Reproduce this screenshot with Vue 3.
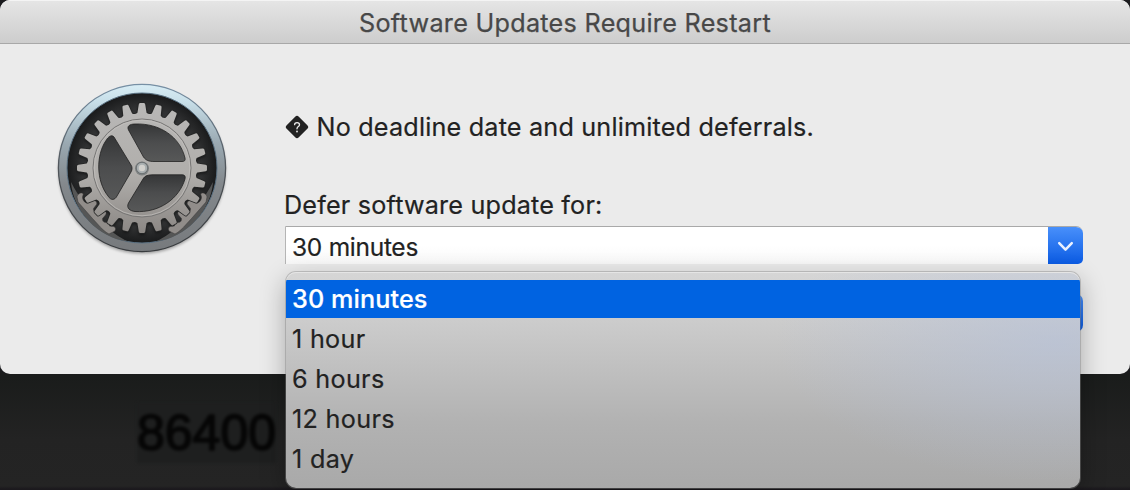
<script setup>
const title = 'Software Updates Require Restart'
const options = ['30 minutes', '1 hour', '6 hours', '12 hours', '1 day']
const selected = options[0]

// Outline of the 24-tooth wheel, centred on the origin.
const pt = (r, deg) => {
  const a = (deg * Math.PI) / 180
  return `${(r * Math.sin(a)).toFixed(2)} ${(-r * Math.cos(a)).toFixed(2)}`
}
let wheel = ''
for (let i = 0; i < 24; i++) {
  const a = i * 15
  wheel += `${i ? 'L' : 'M'}${pt(55.5, a - 4.7)}L${pt(63.6, a - 2.9)}Q${pt(65, a - 2.6)} ${pt(65, a - 1.8)}`
  wheel += `L${pt(65, a + 1.8)}Q${pt(65, a + 2.6)} ${pt(63.6, a + 2.9)}L${pt(55.5, a + 4.7)}Q${pt(53.5, a + 7.5)} ${pt(55.5, a + 10.3)}`
}
wheel += 'Z'

const holes = [
  'M-13.5 -38C-15.5 -42 -12 -44 -7 -44C18 -45 38 -31 43 -10C43.6 -7.5 42.5 -6.5 40 -6.5L12 -6.5C7 -6.5 4 -7.5 1.5 -11Z',
  'M-28 -31C-30.5 -34 -34 -31 -36 -27.5C-46 -13 -46 13 -34 28C-31 33 -27 32 -25 28L-11 4C-9.6 1.5 -9.6 -1 -11 -3Z',
  'M-13.5 35C-16 40 -12 43 -7 43.5C17 45 37 31 43 11C43.8 8 42.5 6.8 40 6.8L12 6.8C6 6.8 3 7.5 1 11Z',
]
const segment =
  'M-65 29C-65 26 -60 23.5 -58.7 26L-59.5 29C-59.5 33 -56 36 -53.5 34.5L-49.5 32.5C-46 32 -44.5 34.5 -45.5 36.5L-48.5 40.5C-49 43.5 -46.5 45 -44 44L-39.5 42.5C-36 42.5 -35 45 -36.5 47L-39.5 50.5C-40 53.5 -37.5 55 -35 54.5L-32 54L-32.5 58L-28 58.5C-25.5 60 -26.5 63 -28 63.5L-33 66C-37 64 -41 60 -44 56.5L-49.5 50.5L-57 42L-64 34Z'
</script>

<template>
  <main class="desktop">
    <div class="backdrop-number">86400</div>
    <section class="dialog">
      <header class="titlebar"><h1>{{ title }}</h1></header>
      <div class="body">
        <svg class="app-icon" viewBox="-90 -90 180 180" aria-hidden="true">
          <defs>
            <linearGradient id="rim" x1="0" y1="0" x2="0" y2="1">
              <stop offset="0" stop-color="#d8edf5" />
              <stop offset=".1" stop-color="#c8dfe9" />
              <stop offset=".35" stop-color="#9aa9b2" />
              <stop offset=".6" stop-color="#83888c" />
              <stop offset="1" stop-color="#777a7d" />
            </linearGradient>
            <linearGradient id="edge" x1="0" y1="0" x2="0" y2="1">
              <stop offset="0" stop-color="#7790a5" />
              <stop offset=".5" stop-color="#50555a" />
              <stop offset="1" stop-color="#383b3e" />
            </linearGradient>
            <linearGradient id="metal" x1="0" y1="0" x2="0" y2="1">
              <stop offset="0" stop-color="#b9b8b7" />
              <stop offset=".55" stop-color="#b0aeab" />
              <stop offset="1" stop-color="#8b8784" />
            </linearGradient>
            <linearGradient id="hole" x1="0" y1="0" x2="0" y2="1">
              <stop offset="0" stop-color="#353637" />
              <stop offset=".5" stop-color="#4c4d4e" />
              <stop offset="1" stop-color="#575858" />
            </linearGradient>
            <radialGradient id="well">
              <stop offset="0" stop-color="#444" />
              <stop offset=".8" stop-color="#303132" />
              <stop offset="1" stop-color="#191a1b" />
            </radialGradient>
            <filter id="soft" x="-20%" y="-20%" width="140%" height="140%">
              <feGaussianBlur stdDeviation="1.6" />
            </filter>
          </defs>
          <circle r="83.5" cy="2" fill="#000" opacity=".35" filter="url(#soft)" />
          <circle r="83.6" fill="url(#rim)" stroke="url(#edge)" stroke-width="1.3" />
          <circle r="75" fill="url(#well)" stroke="#5b7284" stroke-width="1" />
          <path d="M-71 14C-69 43 -44 70 -14 73.5C-30 66 -55 45 -71 14ZM71 14C69 43 44 70 14 73.5C30 66 55 45 71 14Z" fill="#555656" />
          <path :d="wheel" fill="#000" opacity=".5" transform="translate(0 2)" filter="url(#soft)" />
          <g fill="#918d8a" stroke="#3a3938" stroke-width=".5">
            <path :d="segment" />
            <path :d="segment" transform="scale(-1 1)" />
          </g>
          <path :d="wheel" fill="none" stroke="#252626" stroke-width="1.6" />
          <path :d="wheel" fill="url(#metal)" />
          <circle r="49" fill="none" stroke="#777675" stroke-width="1" />
          <circle r="47.8" fill="none" stroke="#c4c2bf" stroke-width=".7" />
          <path v-for="h in holes" :key="h" :d="h" fill="url(#hole)" stroke="#222" stroke-width=".8" />
          <circle r="7" cy=".5" fill="#7e8282" />
          <circle r="5.7" fill="#a9afb0" stroke="#62676a" stroke-width=".8" />
          <circle r="3.2" fill="#d2d1cd" />
        </svg>
        <div class="content">
          <p class="message">
            <svg class="badge" viewBox="0 0 24 24" aria-hidden="true">
              <rect x="3.4" y="3.4" width="17.2" height="17.2" rx="2.6" transform="rotate(45 12 12)" fill="#222" />
              <path d="M9.6 9.7C9.6 6.8 14.5 6.8 14.5 9.7C14.5 11.6 12 11.6 12 13.8" fill="none" stroke="#ebebeb" stroke-width="1.3" stroke-linecap="round" />
              <circle cx="12" cy="16.5" r=".9" fill="#ebebeb" />
            </svg>
            <span class="message-text">No deadline date and unlimited deferrals.</span>
          </p>
          <label class="label">Defer software update for:</label>
          <div class="combo">
            <span class="value">{{ selected }}</span>
            <button class="toggle" aria-label="Toggle list">
              <svg viewBox="0 0 35 38"><path d="M11.2 17.2L17.5 23.6L23.8 17.2" fill="none" stroke="#e8f0ff" stroke-width="2.5" stroke-linecap="round" stroke-linejoin="round" /></svg>
            </button>
          </div>
          <div class="actions"><span class="confirm"></span></div>
        </div>
      </div>
    </section>
    <ul class="menu">
      <li v-for="o in options" :key="o" :class="{ active: o === selected }"><span>{{ o }}</span></li>
    </ul>
  </main>
</template>

<style>
body { margin: 0; overflow: hidden; background: #212121; }
</style>

<style scoped>
* { box-sizing: border-box; }
.desktop {
  position: relative;
  width: 1130px;
  height: 490px;
  overflow: hidden;
  background: linear-gradient(#1b1b1e 0 370px, #1a1c1b 376px, #232323 440px, #242424 486px, #1b191d 489px);
  font-family: Inter, "Liberation Sans", sans-serif;
  font-size: 25.2px;
  color: #222;
}
.backdrop-number {
  position: absolute;
  left: 137px;
  top: 403px;
  font: 50px/60px "Liberation Sans", sans-serif;
  color: #060606;
  -webkit-text-stroke: 1.6px #060606;
  background: #1e1f1f;
  filter: blur(1.4px);
}
.dialog {
  position: relative;
  height: 374px;
  border-radius: 10px;
  overflow: hidden;
  background: #ebebeb;
}
.titlebar {
  height: 44px;
  border-top: 1px solid #f4f4f4;
  border-bottom: 1px solid #a8a8a8;
  background: linear-gradient(#e5e5e5, #cdcdcd);
  display: flex;
  justify-content: center;
}
h1 {
  margin: 0;
  font-size: 25.2px;
  line-height: 44px;
  font-weight: 400;
  letter-spacing: 0.28px;
  color: #484848;
  -webkit-text-stroke: 0.25px;
  white-space: nowrap;
}
.body { display: flex; padding-left: 52px; }
.app-icon { width: 180px; height: 180px; margin-top: 34px; flex: none; }
.content { width: 798px; margin-left: 53px; padding-top: 67px; -webkit-text-stroke: 0.2px; }
.message { display: flex; align-items: center; margin: 0; height: 32px; white-space: nowrap; }
.badge { width: 24px; height: 24px; }
.message-text { margin-left: 7.5px; letter-spacing: 0.19px; }
.label { display: block; margin: 46px 0 0 -1px; height: 37px; line-height: 32px; letter-spacing: 0.18px; white-space: nowrap; }
.combo {
  display: flex;
  height: 38px;
  border-top: 1px solid #a9a9a9;
  border-left: 1px solid #b5b5b5;
  border-top-right-radius: 7px;
  border-bottom-right-radius: 5px;
  background: linear-gradient(#fff 50%, #f8f8f8);
  overflow: hidden;
}
.value { flex: 1; padding-left: 6px; font-size: 24.5px; letter-spacing: -0.28px; line-height: 41px; }
.toggle {
  width: 35px;
  height: 38px;
  margin-top: -1px;
  padding: 0;
  border: 0;
  background: linear-gradient(#4a91fb, #0b5be3);
}
.toggle svg { display: block; width: 35px; height: 38px; }
.actions { display: flex; justify-content: flex-end; margin-top: 30px; }
.confirm { width: 140px; height: 38px; border-radius: 7px; background: linear-gradient(#4a91fb, #0b5be3); }
.menu {
  position: absolute;
  left: 286px;
  top: 272px;
  width: 794px;
  height: 216px;
  margin: 0;
  padding: 8px 0 0;
  list-style: none;
  border-radius: 10px;
  overflow: hidden;
  background:
    radial-gradient(ellipse 280px 140px at 770px 70px, rgba(180, 193, 220, .58), rgba(180, 193, 220, 0)),
    linear-gradient(#d6d6d6 0, #cccccc 48px, #b2b2b2 150px, #a9a9a9);
  box-shadow: 0 0 0 1px rgba(130, 130, 130, .4), 0 8px 26px rgba(0, 0, 0, .3), inset 0 1px 0 #e5e5e5;
}
.menu li { height: 38px; margin-bottom: 2px; padding-left: 6px; line-height: 39px; letter-spacing: 0.3px; white-space: nowrap; -webkit-text-stroke: 0.2px; }
.menu li.active { background: #0063e1; color: #fff; font-weight: 500; letter-spacing: 0.1px; }
</style>
